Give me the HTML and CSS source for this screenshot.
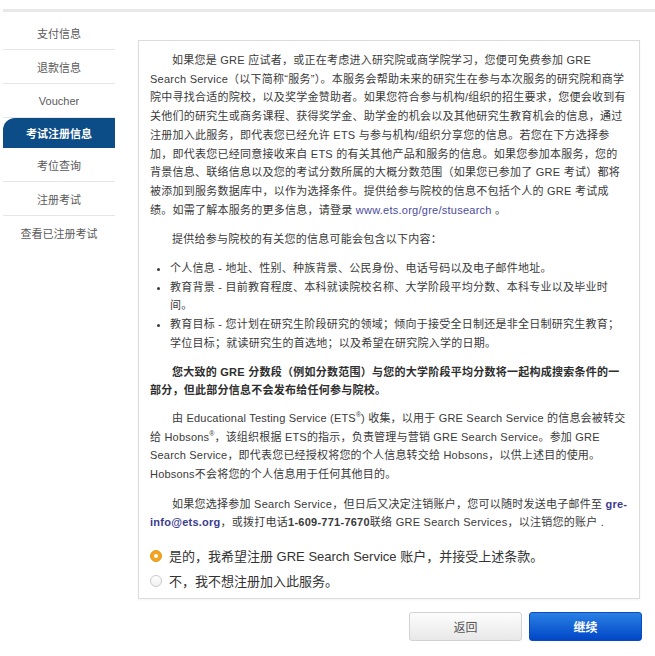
FILE: index.html
```html
<!DOCTYPE html>
<html lang="zh-CN">
<head>
<meta charset="utf-8">
<title>考试注册信息</title>
<link rel="stylesheet" href="styles.css">
</head>
<body>
<div class="topbar"></div>
<div class="layout">
  <nav class="sidebar">
    <a class="nav-item">支付信息</a>
    <a class="nav-item">退款信息</a>
    <a class="nav-item">Voucher</a>
    <a class="nav-item active">考试注册信息</a>
    <a class="nav-item">考位查询</a>
    <a class="nav-item">注册考试</a>
    <a class="nav-item last">查看已注册考试</a>
  </nav>
  <main class="content">
    <section class="panel">
      <p>如果您是 GRE 应试者，或正在考虑进入研究院或商学院学习，您便可免费参加 GRE Search Service（以下简称“服务”）。本服务会帮助未来的研究生在参与本次服务的研究院和商学院中寻找合适的院校，以及奖学金赞助者。如果您符合参与机构/组织的招生要求，您便会收到有关他们的研究生或商务课程、获得奖学金、助学金的机会以及其他研究生教育机会的信息，通过注册加入此服务，即代表您已经允许 ETS 与参与机构/组织分享您的信息。若您在下方选择参加，即代表您已经同意接收来自 ETS 的有关其他产品和服务的信息。如果您参加本服务，您的背景信息、联络信息以及您的考试分数所属的大概分数范围（如果您已参加了 GRE 考试）都将被添加到服务数据库中，以作为选择条件。提供给参与院校的信息不包括个人的 GRE 考试成绩。如需了解本服务的更多信息，请登录 <a class="link">www.ets.org/gre/stusearch</a> 。</p>
      <p class="tight">提供给参与院校的有关您的信息可能会包含以下内容：</p>
      <ul class="list">
        <li>个人信息 - 地址、性别、种族背景、公民身份、电话号码以及电子邮件地址。</li>
        <li>教育背景 - 目前教育程度、本科就读院校名称、大学阶段平均分数、本科专业以及毕业时间。</li>
        <li>教育目标 - 您计划在研究生阶段研究的领域；倾向于接受全日制还是非全日制研究生教育；学位目标；就读研究生的首选地；以及希望在研究院入学的日期。</li>
      </ul>
      <p class="strong">您大致的 GRE 分数段（例如分数范围）与您的大学阶段平均分数将一起构成搜索条件的一部分，但此部分信息不会发布给任何参与院校。</p>
      <p class="ets">由 Educational Testing Service (ETS<sup>®</sup>) 收集，以用于 GRE Search Service 的信息会被转交给 Hobsons<sup>®</sup>，该组织根据 ETS的指示，负责管理与营销 GRE Search Service。参加 GRE Search Service，即代表您已经授权将您的个人信息转交给 Hobsons，以供上述目的使用。Hobsons不会将您的个人信息用于任何其他目的。</p>
      <p>如果您选择参加 Search Service，但日后又决定注销账户，您可以随时发送电子邮件至 <a class="link bold">gre-<wbr>info@ets.org</a>，或拨打电话<b>1-609-771-7670</b>联络 GRE Search Services，以注销您的账户&nbsp;.</p>
      <div class="options">
        <label class="option"><span class="radio checked"></span>是的，我希望注册 GRE Search Service 账户，并接受上述条款。</label>
        <label class="option"><span class="radio"></span>不，我不想注册加入此服务。</label>
      </div>
    </section>
    <div class="actions">
      <button class="btn btn-secondary">返回</button>
      <button class="btn btn-primary">继续</button>
    </div>
  </main>
</div>
</body>
</html>
```
FILE: styles.css
```css
* { box-sizing: border-box; }

body {
  margin: 0;
  background: #fff;
  color: #3a3a3a;
  font-family: "Liberation Sans", "Noto Sans CJK SC", sans-serif;
}

.topbar {
  margin: 9px 0 0 3px;
  height: 3px;
  background: #e8e8e8;
}

.layout {
  display: flex;
  align-items: flex-start;
  padding-left: 3px;
}

.sidebar {
  width: 112px;
  padding-top: 4px;
  display: flex;
  flex-direction: column;
  flex-shrink: 0;
}

.nav-item {
  height: 34px;
  display: flex;
  align-items: center;
  justify-content: center;
  font-size: 11px;
  color: #5a5a5a;
  border-bottom: 1px solid #e6e6e6;
}

.nav-item.active {
  height: 30px;
  background: #0d4d87;
  color: #fff;
  font-weight: bold;
  border-bottom: none;
  border-top-left-radius: 12px;
}

.nav-item.last { border-bottom: none; }

.content {
  margin-left: 23px;
  margin-top: 28px;
  width: 502px;
  flex-shrink: 0;
}

.panel {
  border: 1px solid #dcdcdc;
  padding: 10px 11px 5px 11px;
  box-shadow: 0 1px 2px rgba(0, 0, 0, 0.05);
  background: #fff;
}

.panel p {
  margin: 0 0 11px;
  font-size: 11px;
  line-height: 18.7px;
  letter-spacing: 0.25px;
  text-indent: 22px;
}

.panel p.tight { margin-bottom: 10px; }

.panel p.strong {
  font-weight: bold;
  color: #2e2e2e;
  margin-bottom: 9px;
}

.panel p.ets { letter-spacing: 0.2px; }

.panel sup {
  font-size: 7px;
  line-height: 0;
  letter-spacing: 0;
}

.link {
  color: #4b4b9e;
}

.link.bold {
  font-weight: bold;
  color: #3b3b8e;
}

.list {
  margin: 0 0 10px;
  padding-left: 20px;
  font-size: 11px;
  line-height: 18.7px;
  letter-spacing: 0.25px;
}

.options {
  margin-top: 10px;
}

.option {
  display: flex;
  align-items: center;
  height: 25px;
  font-size: 13px;
  color: #333;
}

.radio {
  width: 12px;
  height: 12px;
  border-radius: 50%;
  border: 1px solid #cacaca;
  background: linear-gradient(#fff, #f1f1f1);
  margin-right: 7px;
  flex-shrink: 0;
  display: flex;
  align-items: center;
  justify-content: center;
}

.radio.checked {
  border-color: #e59a17;
  background: #f3a521;
}

.radio.checked::after {
  content: "";
  width: 4px;
  height: 4px;
  border-radius: 50%;
  background: #fff;
}

.actions {
  display: flex;
  justify-content: flex-end;
  gap: 7px;
  margin-top: 13px;
  margin-right: -2px;
}

.btn {
  width: 113px;
  height: 29px;
  border-radius: 3px;
  font-family: "Liberation Sans", "Noto Sans CJK SC", sans-serif;
  font-size: 12px;
  cursor: pointer;
}

.btn-secondary {
  background: linear-gradient(#fdfdfd, #e8e8e8);
  border: 1px solid #d2d2d2;
  color: #555;
}

.btn-primary {
  background: linear-gradient(#2a80e4, #0046c6);
  border: 1px solid #0a4cbc;
  color: #fff;
  font-weight: bold;
}
```
